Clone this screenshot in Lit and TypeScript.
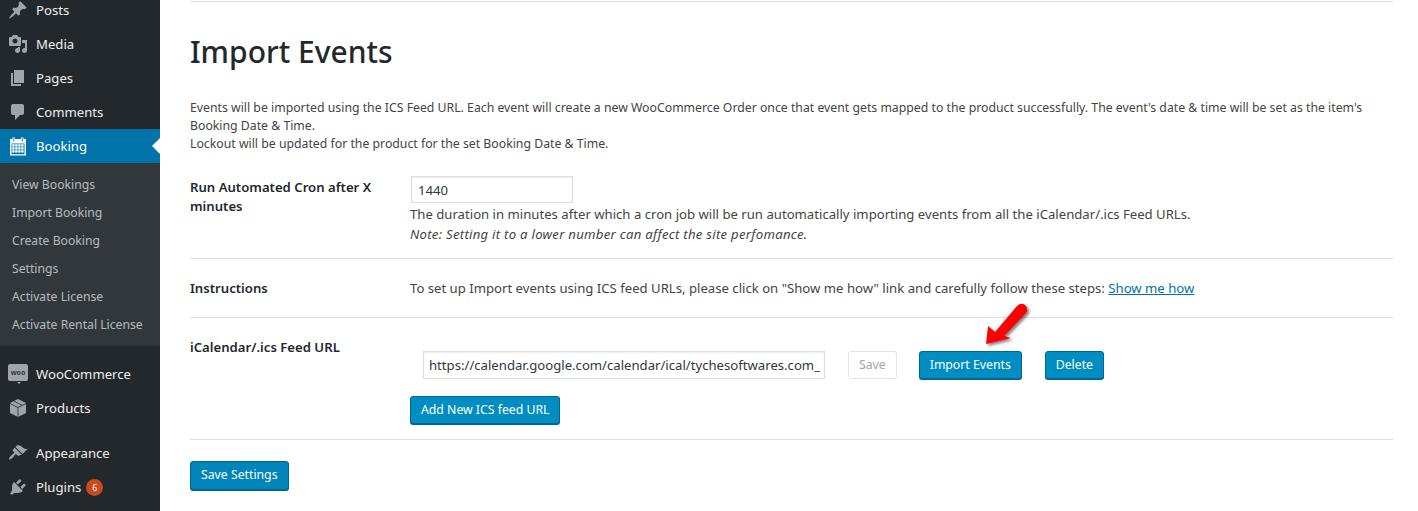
import { LitElement, html, css, svg } from "lit";
import { customElement } from "lit/decorators.js";

const icons: Record<string, unknown> = {
  posts: svg`<path d="M10.44 3.02l1.82-1.82 6.36 6.35-1.83 1.82c-1.05-.68-2.48-.57-3.41.36l-.75.75c-.92.93-1.04 2.35-.35 3.41l-1.83 1.82-2.41-2.41-2.8 2.79c-.42.42-3.38 2.71-3.8 2.29s1.86-3.39 2.28-3.81l2.79-2.79L4.1 9.36l1.83-1.82c1.05.69 2.48.57 3.4-.36l.75-.75c.93-.92 1.05-2.35.36-3.41z"/>`,
  media: svg`<path d="M13 11V4c0-.55-.45-1-1-1h-1.67L9 1H5L3.67 3H2c-.55 0-1 .45-1 1v7c0 .55.45 1 1 1h10c.55 0 1-.45 1-1zM7 4.500c1.38 0 2.500 1.12 2.500 2.500S8.380 9.500 7 9.500 4.500 8.380 4.500 7 5.620 4.500 7 4.500zM14 6h5v10.500c0 1.380-1.120 2.500-2.500 2.500S14 17.880 14 16.500s1.120-2.500 2.500-2.500c.17 0 .34.02.5.05V9h-3V6zm-4 8.050V13h2v3.500c0 1.380-1.120 2.500-2.500 2.500S7 17.880 7 16.500 8.120 14 9.500 14c.17 0 .34.02.5.05z"/>`,
  pages: svg`<path d="M6 15V2h10v13H6zm-1 1h8v2H3V5h2v11z"/>`,
  comments: svg`<path d="M5 2h9c1.100 0 2 .9 2 2v7c0 1.100-.9 2-2 2h-2l-5 5v-5H5c-1.100 0-2-.9-2-2V4c0-1.100.9-2 2-2z"/>`,
  products: svg`<path d="M10 1l8 4v10l-8 4-8-4V5z"/><path d="M2 5.500l8 4 8-4M10 9.500V19M6 3.200l8 4" fill="none" stroke="#23282d" stroke-width=".8"/>`,
  appearance: svg`<path d="M14.480 11.060L7.410 3.990l1.500-1.500c.5-.56 2.300-.47 3.510.32 1.210.8 1.430 1.280 2.910 2.100 1.180.64 2.450 1.260 4.450.85zm-.71.71L6.700 4.700 4.930 6.470c-.39.39-.39 1.020 0 1.410l1.060 1.060c.39.39.39 1.030 0 1.420-.6.6-1.430 1.110-2.210 1.690-.35.26-.7.53-1.010.84-1.320 1.320-2.040 3.100-1.630 3.510.41.41 2.190-.31 3.510-1.630.31-.31.58-.66.84-1.010.58-.78 1.090-1.610 1.690-2.210.39-.39 1.030-.39 1.420 0l1.060 1.060c.39.39 1.020.39 1.410 0z"/>`,
  plugins: svg`<path d="M13.110 4.360L9.870 7.600 8 5.730l3.240-3.240c.35-.34 1.050-.2 1.560.32.52.51.66 1.210.31 1.550zm-8 1.770l.91-1.120 9.010 9.010-1.190.84c-.71.71-2.630 1.160-3.820 1.160H6.140L4.900 17.260c-.59.59-1.540.59-2.120 0-.59-.58-.59-1.530 0-2.120l1.240-1.240v-3.880c0-1.130.4-3.190 1.090-3.890zm7.260 3.970l3.240-3.240c.34-.35 1.040-.21 1.550.31.52.51.66 1.210.31 1.550l-3.240 3.250z"/>`,
};

const subItems = [
  "View Bookings",
  "Import Booking",
  "Create Booking",
  "Settings",
  "Activate License",
  "Activate Rental License",
];

// 4 x 3 grid of day cells for the calendar icon
const dayCells = [8.2, 11.2, 14.2].flatMap((y) =>
  [4.2, 7.2, 10.2, 13.2].map(
    (x) => svg`<rect x=${x} y=${y} width="2.4" height="2.4" fill="#fff" />`
  )
);

@customElement("app-root")
export class AppRoot extends LitElement {
  static styles = css`
    :host {
      display: flex;
      height: 511px;
      overflow: hidden;
      background: #fff;
      font-family: "Noto Sans", sans-serif;
      font-size: 13.15px;
      color: #444;
    }

    .sidebar {
      width: 160px;
      flex: none;
      background: #23282d;
      font-size: 13.15px;
      color: #eee;
    }

    .menu {
      margin-top: -7px;
    }

    .item {
      position: relative;
      display: flex;
      align-items: center;
      height: 34px;
      padding-left: 8px;
      gap: 8px;
    }

    .item svg {
      width: 20px;
      height: 20px;
      fill: #a0a5aa;
      flex: none;
    }

    .item.active {
      background: #0073aa;
      color: #fff;
    }

    .item.active svg {
      fill: #fff;
    }

    .item.active::after {
      content: "";
      position: absolute;
      right: 0;
      top: 9px;
      border: 8px solid transparent;
      border-right-color: #fff;
      border-left-width: 0;
    }

    .submenu {
      background: #32373c;
      padding: 8px 0 7px;
      margin-bottom: 11px;
    }

    .submenu div {
      height: 28px;
      line-height: 28px;
      padding-left: 12px;
      font-size: 12.2px;
      color: rgba(240, 245, 250, 0.7);
    }

    .gap {
      height: 11px;
    }

    .woo {
      position: relative;
      width: 20px;
      height: 17px;
      margin-top: -3px;
      flex: none;
      border-radius: 2px;
      background: #a0a5aa;
      color: #32373c;
      font-size: 7px;
      font-weight: 700;
      line-height: 17px;
      text-align: center;
    }

    .woo::after {
      content: "";
      position: absolute;
      left: 9px;
      bottom: -3px;
      border: 2px solid transparent;
      border-top-color: #a0a5aa;
      border-bottom-width: 0;
    }

    .badge {
      width: 17px;
      height: 17px;
      border-radius: 50%;
      background: #ca4a1f;
      color: #fff;
      font-size: 9px;
      line-height: 17px;
      text-align: center;
      margin-left: -3px;
    }

    .main {
      width: 1203px;
      margin-left: 30px;
      border-top: 1px solid #ddd;
      margin-top: 1px;
    }

    h1 {
      margin: 30px 0 0;
      font-size: 30px;
      line-height: 40px;
      font-weight: 500;
      color: #23282d;
    }

    .intro {
      margin: 27px 0 0;
      font-size: 12.28px;
      line-height: 18px;
    }

    .row {
      display: grid;
      grid-template-columns: 220px 1fr;
      border-bottom: 1px solid #ddd;
    }

    .label {
      font-weight: 600;
      color: #23282d;
      line-height: 19px;
      padding-right: 30px;
    }

    .cron {
      margin-top: 23px;
      height: 82px;
      align-items: start;
    }

    .cron .label {
      padding-top: 2px;
    }

    .input {
      box-sizing: border-box;
      display: flex;
      align-items: center;
      border: 1px solid #ddd;
      box-shadow: inset 0 1px 2px rgba(0, 0, 0, 0.07);
      color: #32373c;
      padding: 0 5px;
      white-space: nowrap;
      overflow: hidden;
    }

    .cron .input {
      width: 162px;
      height: 27px;
      margin-left: 1px;
      padding: 0 6px;
    }

    .desc {
      line-height: 20px;
      margin-top: 1px;
    }

    .note {
      font-style: italic;
      letter-spacing: 0.27px;
    }

    .instructions {
      height: 58px;
      align-items: center;
    }

    a {
      color: #0073aa;
      text-decoration: underline;
    }

    .feed {
      position: relative;
      height: 121px;
    }

    .feed .label {
      padding-top: 20px;
    }

    .feed-line {
      display: flex;
      align-items: center;
      margin: 33px 0 0 13px;
    }

    .feed-line .input {
      width: 402px;
      height: 28px;
      margin-right: 23px;
    }

    .button {
      box-sizing: border-box;
      display: inline-block;
      height: 28px;
      line-height: 26px;
      padding: 0 10px;
      border: 1px solid #006799;
      border-radius: 3px;
      background: #008ec2;
      box-shadow: 0 1px 0 #006799;
      color: #fff;
      font-size: 12.25px;
      white-space: nowrap;
    }

    .button.off {
      background: #fff;
      border-color: #e4e4e4;
      box-shadow: none;
      color: #a0a5aa;
      margin-right: 22px;
    }

    .button.import {
      margin-right: 23px;
    }

    .button.add {
      margin-top: 17px;
    }

    .button.save {
      background: #0085ba;
      margin-top: 21px;
      height: 29px;
    }

    .arrow {
      position: absolute;
      left: 790px;
      top: -18px;
      width: 50px;
      height: 50px;
      overflow: visible;
      fill: #f00;
      filter: drop-shadow(2px 2px 1.5px rgba(0, 0, 0, 0.5));
    }
  `;

  private item(name: string, label: string) {
    return html`<div class="item">
      <svg viewBox="0 0 20 20">${icons[name]}</svg><span>${label}</span>
    </div>`;
  }

  render() {
    return html`
      <nav class="sidebar">
        <div class="menu">
          ${this.item("posts", "Posts")} ${this.item("media", "Media")}
          ${this.item("pages", "Pages")} ${this.item("comments", "Comments")}
          <div class="item active">
            <svg viewBox="0 0 20 20">
              <path d="M2 3h2.500V1.500h2.500V3h6V1.500h2.500V3H18v16.500H2z" />
              <rect x="3.500" y="7.500" width="13" height="10.700" fill="#0073aa" />
              <rect x="5.300" y="2.300" width="1" height="3" fill="#0073aa" />
              <rect x="13.800" y="2.300" width="1" height="3" fill="#0073aa" />
              ${dayCells}
            </svg>
            <span>Booking</span>
          </div>
          <div class="submenu">
            ${subItems.map((s) => html`<div>${s}</div>`)}
          </div>
          <div class="item"><span class="woo">woo</span><span>WooCommerce</span></div>
          ${this.item("products", "Products")}
          <div class="gap"></div>
          ${this.item("appearance", "Appearance")}
          <div class="item">
            <svg viewBox="0 0 20 20">${icons.plugins}</svg><span>Plugins</span>
            <span class="badge">6</span>
          </div>
        </div>
      </nav>
      <main class="main">
        <h1>Import Events</h1>
        <p class="intro">
          Events will be imported using the ICS Feed URL. Each event will create
          a new WooCommerce Order once that event gets mapped to the product
          successfully. The event's date &amp; time will be set as the item's
          Booking Date &amp; Time.<br />
          Lockout will be updated for the product for the set Booking Date &amp;
          Time.
        </p>
        <div class="row cron">
          <div class="label">Run Automated Cron after X minutes</div>
          <div>
            <div class="input">1440</div>
            <div class="desc">
              The duration in minutes after which a cron job will be run
              automatically importing events from all the iCalendar/.ics Feed
              URLs.<br />
              <span class="note"
                >Note: Setting it to a lower number can affect the site
                perfomance.</span
              >
            </div>
          </div>
        </div>
        <div class="row instructions">
          <div class="label">Instructions</div>
          <div>
            To set up Import events using ICS feed URLs, please click on "Show me
            how" link and carefully follow these steps:
            <a href="#">Show me how</a>
          </div>
        </div>
        <div class="row feed">
          <div class="label">iCalendar/.ics Feed URL</div>
          <div>
            <div class="feed-line">
              <div class="input">
                https://calendar.google.com/calendar/ical/tychesoftwares.com_
              </div>
              <span class="button off">Save</span>
              <span class="button import">Import Events</span>
              <span class="button">Delete</span>
            </div>
            <span class="button add">Add New ICS feed URL</span>
          </div>
          <svg class="arrow" viewBox="0 0 50 50">
            <path d="M6 44L8 26l7 6L37 6q4-4 8-1 4 4 1 8L24 36l7 2z" />
          </svg>
        </div>
        <span class="button save">Save Settings</span>
      </main>
    `;
  }
}
